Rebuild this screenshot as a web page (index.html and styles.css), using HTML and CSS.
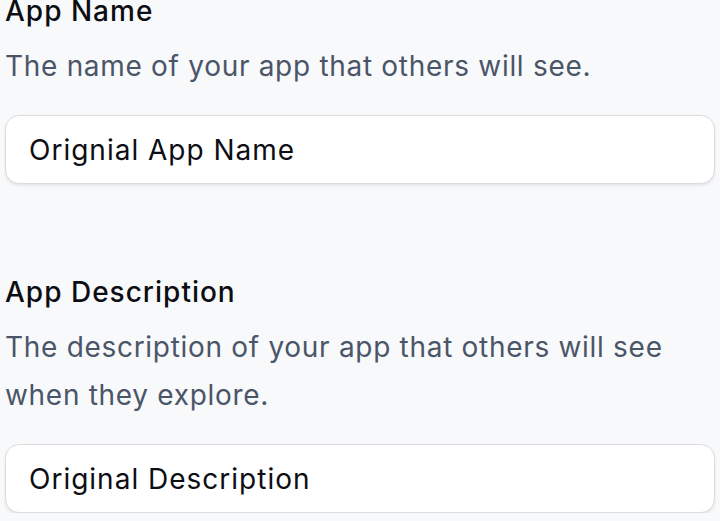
FILE: index.html
```html
<!DOCTYPE html>
<html lang="en">
<head>
<meta charset="utf-8">
<title>App Settings</title>
<link rel="stylesheet" href="styles.css">
</head>
<body>
<main class="form">
  <section class="field">
    <h2 class="label">App Name</h2>
    <p class="desc">The name of your app that others will see.</p>
    <input class="input" type="text" value="Orignial App Name">
  </section>
  <section class="field">
    <h2 class="label">App Description</h2>
    <p class="desc">The description of your app that others will see when they explore.</p>
    <input class="input" type="text" value="Original Description">
  </section>
</main>
</body>
</html>
```

FILE: styles.css
```css
html, body {
  margin: 0;
  padding: 0;
  background: #f8f9fb;
}
body {
  font-family: Inter, "Noto Sans", sans-serif;
  overflow: hidden;
}
.form {
  margin-top: -9px;
  padding: 0 5px;
  display: flex;
  flex-direction: column;
  gap: 88px;
}
.field {
  display: flex;
  flex-direction: column;
}
.label {
  margin: 0;
  font-size: 28px;
  line-height: 40px;
  font-weight: 500;
  letter-spacing: 1px;
  color: #0d0d14;
}
.desc {
  margin: 11px 0 0;
  font-size: 28px;
  line-height: 48px;
  letter-spacing: 0.7px;
  color: #4b5568;
}
.input {
  margin-top: 25px;
  box-sizing: border-box;
  width: 100%;
  height: 69px;
  padding: 0 23px;
  border: 1.5px solid #dcdce0;
  border-radius: 14px;
  background: #ffffff;
  box-shadow: 0 2px 3px rgba(0, 0, 0, 0.08);
  font-family: inherit;
  font-size: 28px;
  letter-spacing: 1px;
  color: #0d0d14;
  outline: none;
}
```
